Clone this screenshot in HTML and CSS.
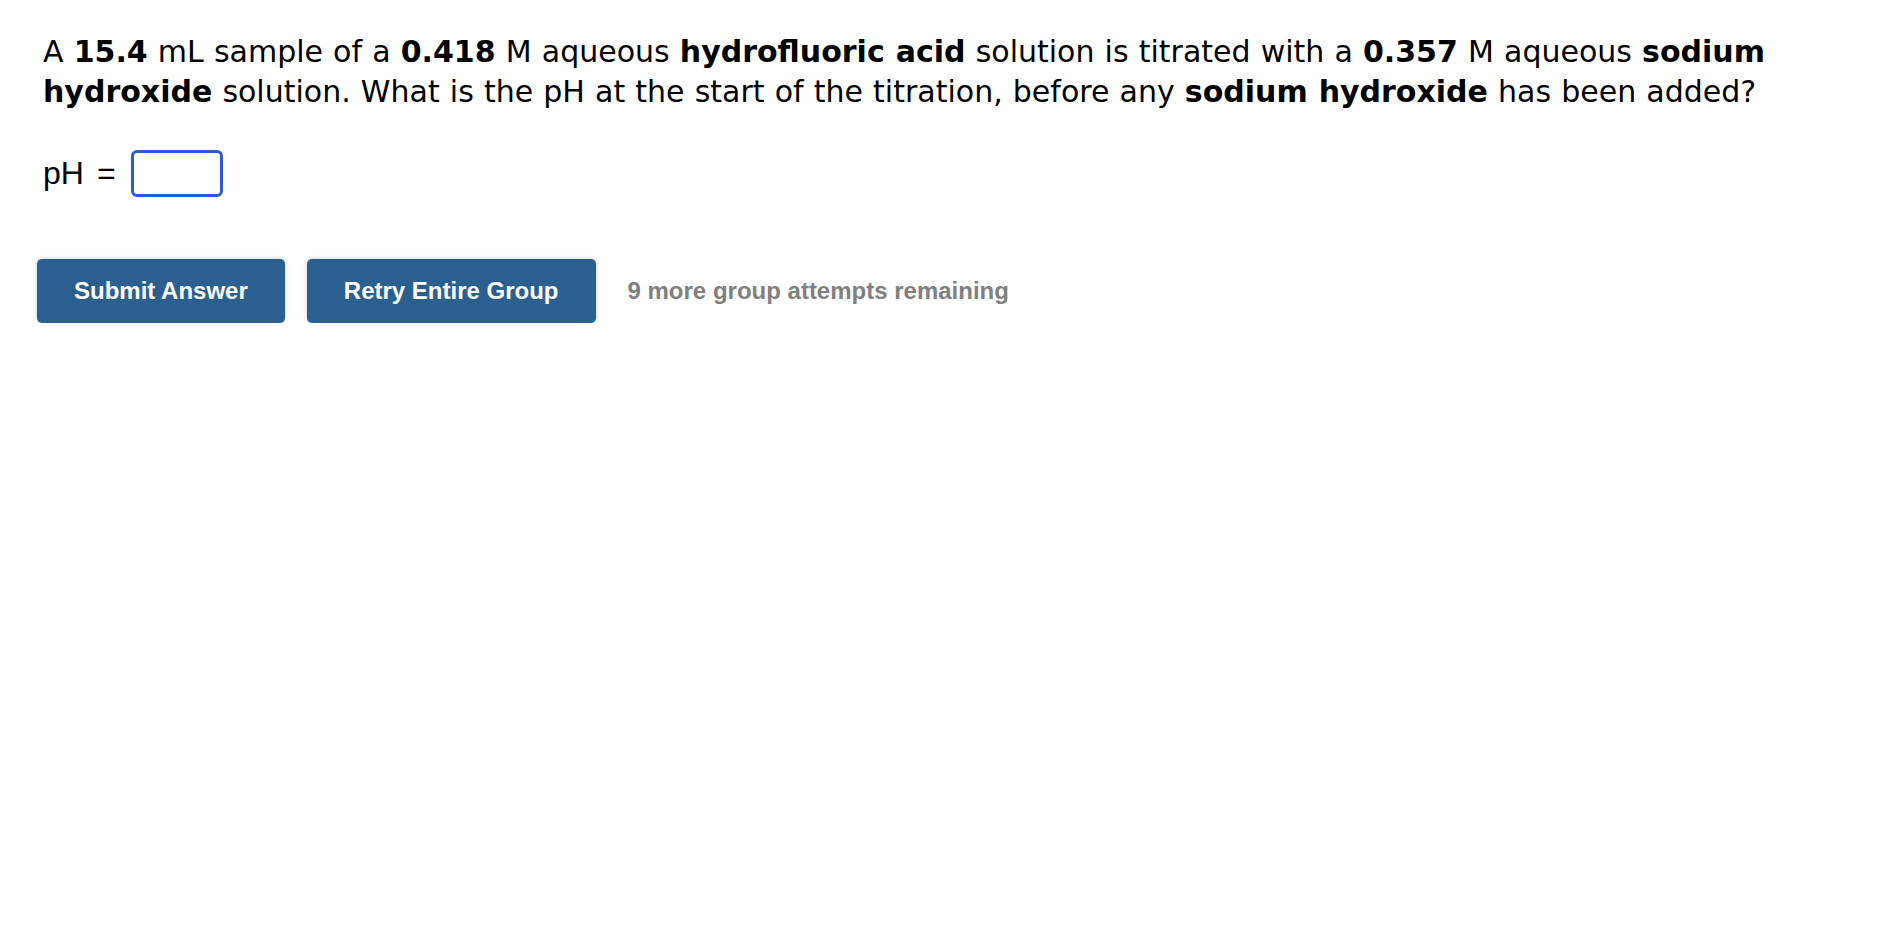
FILE: index.html
```html
<!DOCTYPE html>
<html>
<head>
<meta charset="utf-8">
<link rel="stylesheet" href="styles.css">
</head>
<body>
<div class="page">
  <p class="question">A <b>15.4</b> mL sample of a <b>0.418</b> M aqueous <b>hydrofluoric acid</b> solution is titrated with a <b>0.357</b> M aqueous <b>sodium</b> <b>hydroxide</b> solution. What is the pH at the start of the titration, before any <b>sodium hydroxide</b> has been added?</p>
  <div class="answer-row">
    <span class="label">pH</span>
    <span class="eq">=</span>
    <input class="answer" type="text">
  </div>
  <div class="actions">
    <button class="btn">Submit Answer</button>
    <button class="btn">Retry Entire Group</button>
    <span class="attempts">9 more group attempts remaining</span>
  </div>
</div>
</body>
</html>
```

FILE: styles.css
```css
html, body {
  margin: 0;
  padding: 0;
  background: #ffffff;
}

.page {
  padding: 32px 40px 0 43px;
}

.question {
  margin: 0;
  font-family: "DejaVu Sans", Verdana, sans-serif;
  font-size: 30px;
  line-height: 40px;
  word-spacing: 0.6px;
  color: #000000;
}

.question b {
  font-weight: bold;
}

.answer-row {
  display: flex;
  align-items: center;
  margin-top: 38px;
  font-family: "Liberation Sans", Arial, sans-serif;
  font-size: 32px;
  line-height: 47px;
  color: #000000;
}

.eq {
  margin-left: 13px;
  margin-right: 15px;
}

.answer {
  box-sizing: border-box;
  width: 92px;
  height: 47px;
  margin: 0;
  border: 3px solid #2a5bd1;
  border-radius: 6px;
  outline: none;
  background: #ffffff;
}

.actions {
  display: flex;
  align-items: center;
  margin-top: 62px;
  margin-left: -6px;
}

.btn {
  box-sizing: border-box;
  height: 64px;
  margin: 0 22px 0 0;
  padding: 0 37px;
  border: none;
  border-radius: 5px;
  background: #2a5f90;
  color: #ffffff;
  font-family: "Liberation Sans", Arial, sans-serif;
  font-weight: bold;
  font-size: 24px;
  box-shadow: 0 0 4px rgba(0, 0, 0, 0.22);
}

.attempts {
  margin-left: 10px;
  font-family: "Liberation Sans", Arial, sans-serif;
  font-weight: bold;
  font-size: 24px;
  color: #808080;
}
```
